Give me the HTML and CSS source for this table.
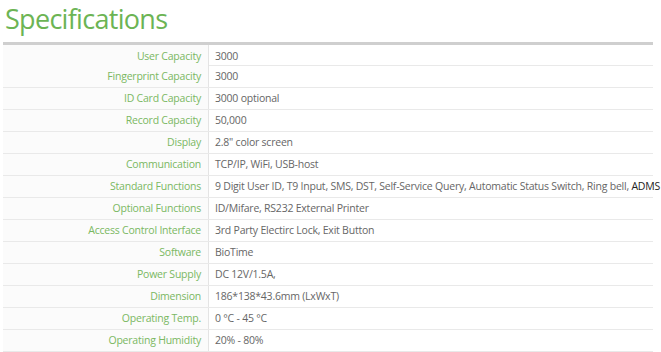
FILE: index.html
```html
<!DOCTYPE html>
<html>
<head>
<meta charset="utf-8">
<link rel="stylesheet" href="styles.css">
</head>
<body>
<div class="page">
  <h1 class="title">Specifications</h1>
  <div class="specs">
    <div class="row first"><div class="label">User Capacity</div><div class="value">3000</div></div>
    <div class="row"><div class="label">Fingerprint Capacity</div><div class="value">3000</div></div>
    <div class="row"><div class="label">ID Card Capacity</div><div class="value">3000 optional</div></div>
    <div class="row"><div class="label">Record Capacity</div><div class="value">50,000</div></div>
    <div class="row"><div class="label">Display</div><div class="value">2.8" color screen</div></div>
    <div class="row"><div class="label">Communication</div><div class="value">TCP/IP, WiFi, USB-host</div></div>
    <div class="row"><div class="label">Standard Functions</div><div class="value">9 Digit User ID, T9 Input, SMS, DST, Self-Service Query, Automatic Status Switch, Ring bell, <span class="dark">ADMS</span></div></div>
    <div class="row"><div class="label">Optional Functions</div><div class="value">ID/Mifare, RS232 External Printer</div></div>
    <div class="row"><div class="label">Access Control Interface</div><div class="value">3rd Party Electirc Lock, Exit Button</div></div>
    <div class="row"><div class="label">Software</div><div class="value">BioTime</div></div>
    <div class="row"><div class="label">Power Supply</div><div class="value">DC 12V/1.5A,</div></div>
    <div class="row"><div class="label">Dimension</div><div class="value">186*138*43.6mm (LxWxT)</div></div>
    <div class="row"><div class="label">Operating Temp.</div><div class="value">0 °C - 45 °C</div></div>
    <div class="row"><div class="label">Operating Humidity</div><div class="value">20% - 80%</div></div>
  </div>
</div>
</body>
</html>
```
FILE: styles.css
```css
html, body {
  margin: 0;
  padding: 0;
  background: #ffffff;
}
.page {
  width: 661px;
  height: 352px;
  overflow: hidden;
  font-family: "Open Sans", "Noto Sans", sans-serif;
}
.title {
  margin: 0;
  padding: 0 0 0 5px;
  height: 42px;
  font-weight: 400;
  font-size: 27px;
  line-height: 38px;
  letter-spacing: -0.7px;
  color: #6cb454;
}
.specs {
  margin-left: 3px;
  width: 650px;
  border-top: 3px solid #cfcfcf;
}
.row {
  display: grid;
  grid-template-columns: 206px 1fr;
  height: 21px;
  border-bottom: 1px solid #e9e9e9;
  font-size: 10.5px;
  letter-spacing: -0.22px;
  line-height: 21px;
}
.row.first {
  height: 20px;
  line-height: 22px;
}
.label {
  text-align: right;
  padding-right: 7px;
  color: #7ab862;
  background: #fbfbfb;
  border-right: 1px solid #e4e4e4;
}
.value {
  padding-left: 6px;
  color: #666666;
  white-space: nowrap;
}
.dark {
  color: #222222;
}
```
